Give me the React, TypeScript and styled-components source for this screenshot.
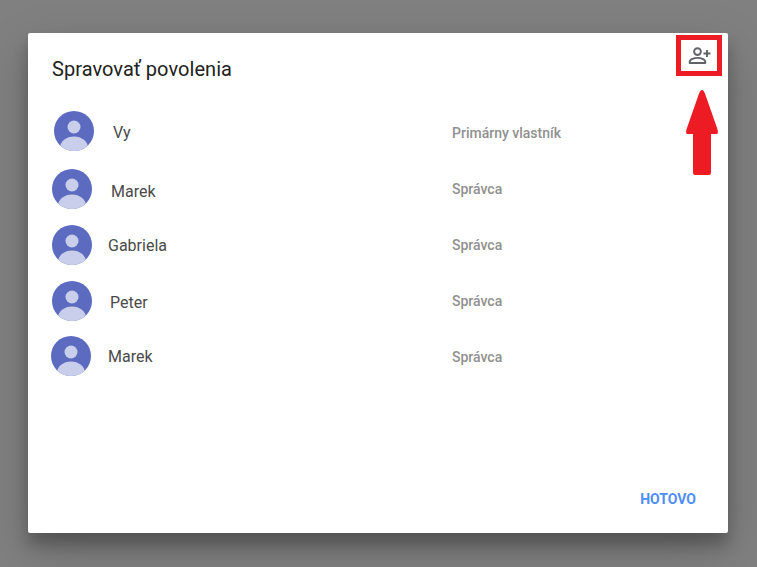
import styled, { createGlobalStyle } from 'styled-components';

const people = [
  { name: 'Vy', role: 'Primárny vlastník', shift: 2, gap: 19, top: 0, nameDrop: 2, roleDrop: 4 },
  { name: 'Marek', role: 'Správca', shift: 0, gap: 19, top: 18, nameDrop: 4, roleDrop: 0 },
  { name: 'Gabriela', role: 'Správca', shift: 0, gap: 16, top: 16, nameDrop: 0, roleDrop: 0 },
  { name: 'Peter', role: 'Správca', shift: 0, gap: 18, top: 16, nameDrop: 2, roleDrop: 0 },
  { name: 'Marek', role: 'Správca', shift: -1, gap: 17, top: 15, nameDrop: 0, roleDrop: 2 },
];

export default function App() {
  return (
    <>
      <GlobalStyle />
      <Backdrop>
        <Dialog>
          <Title>Spravovať povolenia</Title>
          <AddPerson aria-label="Pridať osobu">
            <svg width="24" height="24" viewBox="0 0 24 24" fill="none" stroke="#5f6368" strokeWidth="1.9">
              <circle cx="9.5" cy="7.6" r="3.4" />
              <path d="M1.7 19v-1.2c0-2.6 4.6-3.9 7.8-3.9s7.8 1.3 7.8 3.9V19Z" strokeLinejoin="round" />
              <path d="M19 6v7M15.5 9.5h7" />
            </svg>
          </AddPerson>
          <List>
            {people.map((p, i) => (
              <Row key={i} $shift={p.shift} $top={p.top}>
                <Avatar>
                  <svg width="40" height="40" viewBox="0 0 40 40">
                    <circle cx="20" cy="20" r="20" fill="#5c6bc0" />
                    <clipPath id={`clip${i}`}>
                      <circle cx="20" cy="20" r="20" />
                    </clipPath>
                    <circle cx="20" cy="16" r="6.5" fill="#c9cfeb" />
                    <ellipse cx="20" cy="37" rx="14" ry="11.5" fill="#c9cfeb" clipPath={`url(#clip${i})`} />
                  </svg>
                </Avatar>
                <Name $gap={p.gap} $drop={p.nameDrop}>{p.name}</Name>
                <Role $shift={p.shift} $drop={p.roleDrop}>{p.role}</Role>
              </Row>
            ))}
          </List>
          <Footer>
            <Done>HOTOVO</Done>
          </Footer>
        </Dialog>
        <Highlight />
        <Arrow width="32" height="87" viewBox="0 0 32 87">
          <path
            d="M16 1 C14.5 1 13.5 3 12.5 6 L0.6 40 C-0.2 43 0 45 1.5 45 L7 45 L7 83 Q7 86 9 86 L23 86 Q25 86 25 83 L25 45 L30.5 45 C32 45 32.2 43 31.4 40 L19.5 6 C18.5 3 17.5 1 16 1 Z"
            fill="#ed1c24"
          />
        </Arrow>
      </Backdrop>
    </>
  );
}

//styles

const GlobalStyle = createGlobalStyle`
  html, body {
    margin: 0;
    padding: 0;
  }
  body {
    font-family: Roboto, "Liberation Sans", sans-serif;
  }
`;

const Backdrop = styled.div`
  position: relative;
  width: 757px;
  height: 567px;
  overflow: hidden;
  box-sizing: border-box;
  padding: 33px 29px 34px 28px;
  background-color: #808080;
`;

const Dialog = styled.div`
  position: relative;
  display: flex;
  flex-direction: column;
  width: 700px;
  height: 500px;
  box-sizing: border-box;
  padding: 24px 24px 20px;
  background-color: #fff;
  border-radius: 2px;
  box-shadow: 0 12px 15px 0 rgba(0, 0, 0, 0.24), 0 17px 50px 0 rgba(0, 0, 0, 0.19);
`;

const Title = styled.h1`
  margin: 0;
  font-size: 20px;
  line-height: 24px;
  font-weight: 400;
  letter-spacing: 0.05px;
  color: #212121;
`;

const AddPerson = styled.button`
  position: absolute;
  top: 11px;
  right: 16px;
  display: flex;
  padding: 0;
  border: 0;
  background: none;
`;

const List = styled.div`
  display: flex;
  flex-direction: column;
  margin-top: 30px;
  flex: 1;
`;

const Row = styled.div<{ $shift: number; $top: number }>`
  display: flex;
  align-items: center;
  height: 40px;
  margin-top: ${(props) => props.$top}px;
  margin-left: ${(props) => props.$shift}px;
`;

const Avatar = styled.div`
  display: flex;
  width: 40px;
  height: 40px;
  flex-shrink: 0;
`;

const Name = styled.div<{ $gap: number; $drop: number }>`
  width: ${(props) => 400 - 40 - props.$gap}px;
  margin-left: ${(props) => props.$gap}px;
  padding-top: ${(props) => props.$drop}px;
  font-size: 16px;
  color: #4a4a4a;
`;

const Role = styled.div<{ $shift: number; $drop: number }>`
  margin-left: ${(props) => -props.$shift}px;
  padding-top: ${(props) => props.$drop}px;
  font-size: 14px;
  font-weight: 500;
  color: #909090;
`;

const Footer = styled.div`
  display: flex;
  justify-content: flex-end;
`;

const Done = styled.button`
  padding: 1px 8px 0;
  height: 30px;
  border: 0;
  background: none;
  font-family: inherit;
  font-size: 14px;
  font-weight: 700;
  color: #4e8ef7;
`;

const Highlight = styled.div`
  position: absolute;
  left: 676px;
  top: 35px;
  width: 46px;
  height: 41px;
  box-sizing: border-box;
  border: 5px solid #ed1c24;
`;

const Arrow = styled.svg`
  position: absolute;
  left: 686px;
  top: 89px;
`;
